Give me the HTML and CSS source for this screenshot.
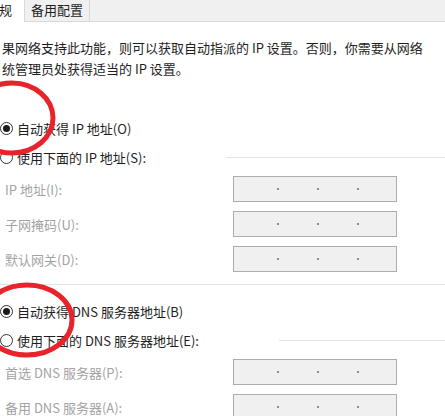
FILE: index.html
```html
<!DOCTYPE html>
<html>
<head>
<meta charset="utf-8">
<link rel="stylesheet" href="styles.css">
</head>
<body>
<div class="page">
  <div class="tabs">
    <div class="tab-active">规</div>
    <div class="tab">备用配置</div>
    <div class="tab-rest"></div>
  </div>
  <div class="desc">
    <div>果网络支持此功能，则可以获取自动指派的 IP 设置。否则，你需要从网络</div>
    <div>统管理员处获得适当的 IP 设置。</div>
  </div>

  <div class="radio r1"><span class="dot checked"></span><span>自动获得 IP 地址(O)</span></div>
  <div class="radio r2 group"><span class="dot"></span><span>使用下面的 IP 地址(S):</span><span class="gline"></span></div>

  <div class="fields">
    <div class="field"><span class="label">IP 地址(I):</span><span class="ipbox"><i></i><i></i><i></i></span></div>
    <div class="field"><span class="label">子网掩码(U):</span><span class="ipbox"><i></i><i></i><i></i></span></div>
    <div class="field"><span class="label">默认网关(D):</span><span class="ipbox"><i></i><i></i><i></i></span></div>
  </div>

  <div class="sep"></div>

  <div class="radio r3"><span class="dot checked"></span><span>自动获得 DNS 服务器地址(B)</span></div>
  <div class="radio r2 group"><span class="dot"></span><span>使用下面的 DNS 服务器地址(E):</span><span class="gline"></span></div>

  <div class="fields">
    <div class="field"><span class="label">首选 DNS 服务器(P):</span><span class="ipbox"><i></i><i></i><i></i></span></div>
    <div class="field"><span class="label">备用 DNS 服务器(A):</span><span class="ipbox"><i></i><i></i><i></i></span></div>
  </div>

  <svg class="marks" width="445" height="416" viewBox="0 0 445 416">
    <ellipse cx="12" cy="118" rx="41" ry="35" fill="none" stroke="#e8232b" stroke-width="5"/>
    <ellipse cx="27" cy="320" rx="45" ry="35" fill="none" stroke="#e8232b" stroke-width="5"/>
  </svg>
</div>
</body>
</html>
```

FILE: styles.css
```css
html, body {
  margin: 0;
  padding: 0;
  background: #ffffff;
}
.page {
  position: relative;
  width: 445px;
  height: 416px;
  overflow: hidden;
  font-family: "Noto Sans CJK SC", "Noto Sans", sans-serif;
  font-size: 13px;
  color: #1e1e1e;
}
.tabs {
  display: flex;
  height: 22px;
}
.tab-active {
  width: 25px;
  height: 22px;
  line-height: 20px;
  background: #ffffff;
  margin-left: -1px;
  box-sizing: border-box;
}
.tab {
  height: 22px;
  box-sizing: border-box;
  padding: 0 6px;
  line-height: 20px;
  background: #f0f0f0;
  border: 1px solid #d9d9d9;
  border-top: none;
}
.tab-rest {
  flex: 1;
  background: #f0f0f0;
  border-bottom: 1px solid #d9d9d9;
}
.desc {
  margin-top: 15px;
  padding-left: 2px;
  line-height: 21px;
  white-space: nowrap;
}
.radio {
  display: flex;
  align-items: center;
  height: 21px;
  white-space: nowrap;
  gap: 4px;
}
.r1 { margin-top: 39px; }
.r2 { margin-top: 8px; }
.r3 { margin-top: 16px; }
.dot {
  flex: none;
  width: 13px;
  height: 13px;
  box-sizing: border-box;
  border: 1px solid #333333;
  border-radius: 50%;
  background: #ffffff;
  display: flex;
  align-items: center;
  justify-content: center;
}
.dot.checked::after {
  content: "";
  width: 7px;
  height: 7px;
  border-radius: 50%;
  background: #1a1a1a;
}
.gline {
  flex: 1;
  height: 1px;
  margin-left: 76px;
  background: #e3e3e3;
}
.fields {
  margin-top: 8px;
  display: flex;
  flex-direction: column;
  gap: 9px;
}
.field {
  display: flex;
  align-items: center;
  height: 26px;
}
.label {
  width: 228px;
  padding-left: 5px;
  color: #a3a3a3;
  white-space: nowrap;
}
.ipbox {
  width: 164px;
  height: 26px;
  box-sizing: border-box;
  border: 1px solid #adadad;
  background: #f0f0f0;
  display: flex;
  align-items: center;
  padding-left: 43px;
  gap: 38px;
}
.ipbox i {
  width: 2px;
  height: 2px;
  background: #8c8c8c;
}
.sep {
  margin-top: 12px;
  height: 1px;
  background: #e3e3e3;
}
.marks {
  position: absolute;
  left: 0;
  top: 0;
  pointer-events: none;
}
```
